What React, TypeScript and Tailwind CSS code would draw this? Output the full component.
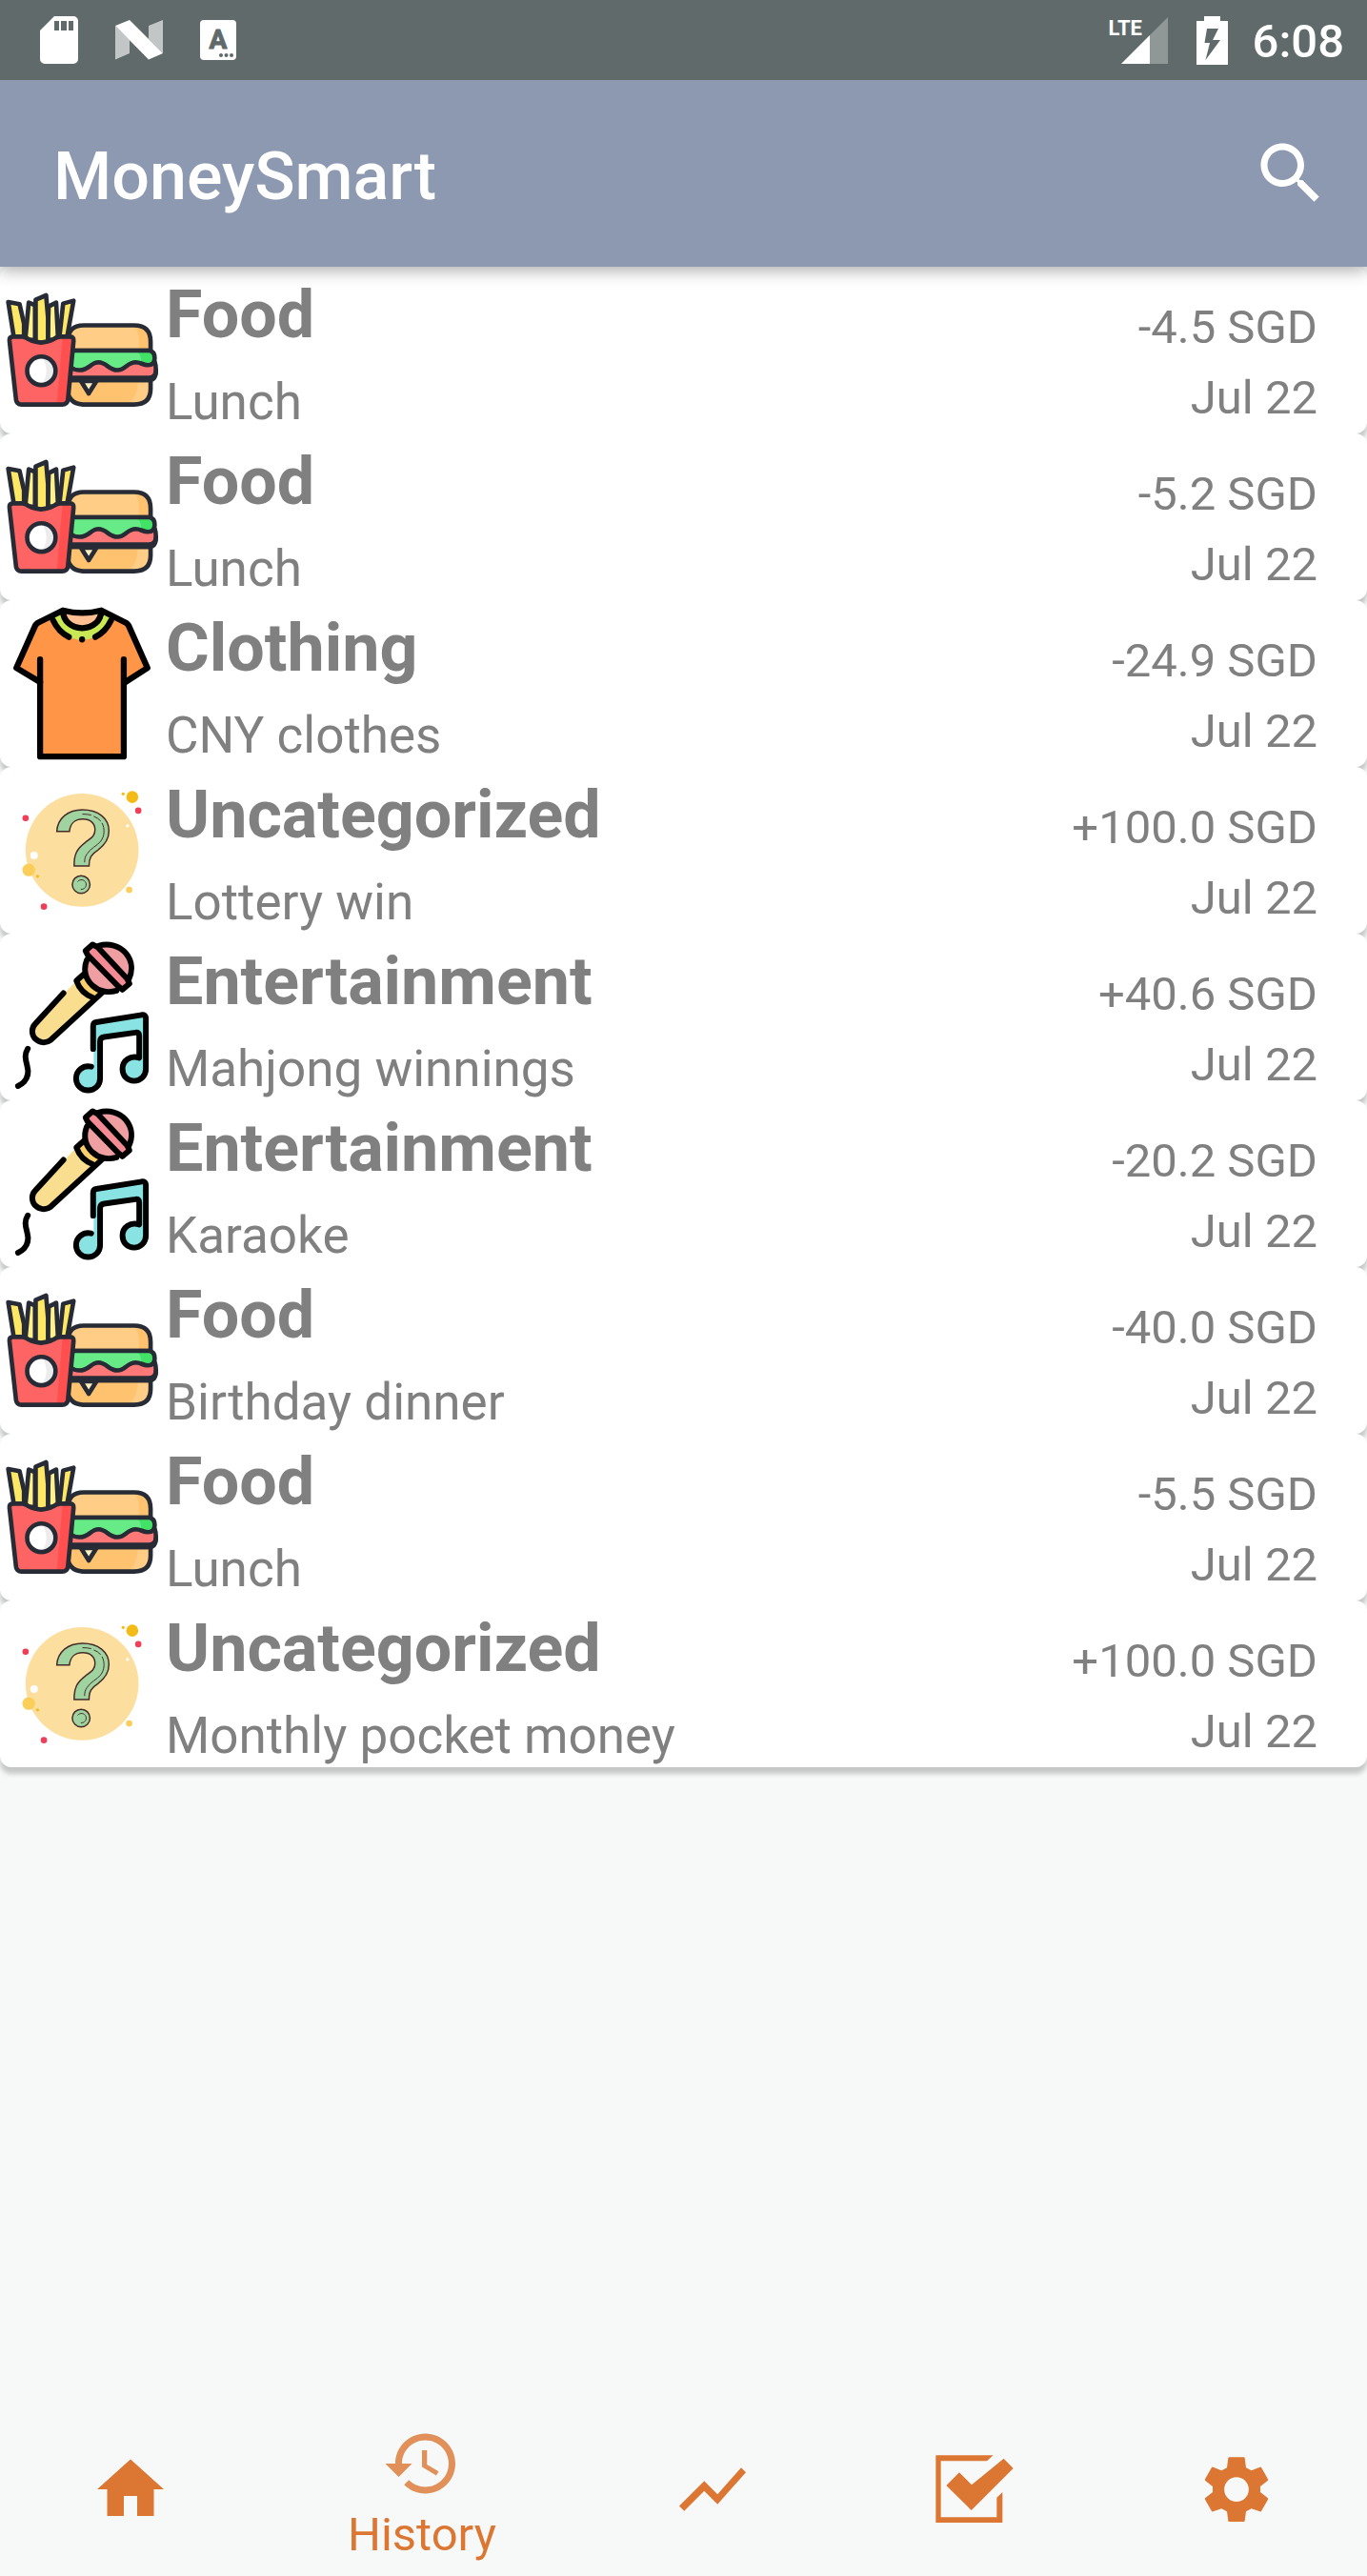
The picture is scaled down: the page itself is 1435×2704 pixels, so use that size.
import React from 'react';

type Category = 'Food' | 'Clothing' | 'Uncategorized' | 'Entertainment';

type Transaction = {
  category: Category;
  note: string;
  amount: string;
  date: string;
};

const transactions: Transaction[] = [
  { category: 'Food', note: 'Lunch', amount: '-4.5 SGD', date: 'Jul 22' },
  { category: 'Food', note: 'Lunch', amount: '-5.2 SGD', date: 'Jul 22' },
  { category: 'Clothing', note: 'CNY clothes', amount: '-24.9 SGD', date: 'Jul 22' },
  { category: 'Uncategorized', note: 'Lottery win', amount: '+100.0 SGD', date: 'Jul 22' },
  { category: 'Entertainment', note: 'Mahjong winnings', amount: '+40.6 SGD', date: 'Jul 22' },
  { category: 'Entertainment', note: 'Karaoke', amount: '-20.2 SGD', date: 'Jul 22' },
  { category: 'Food', note: 'Birthday dinner', amount: '-40.0 SGD', date: 'Jul 22' },
  { category: 'Food', note: 'Lunch', amount: '-5.5 SGD', date: 'Jul 22' },
  { category: 'Uncategorized', note: 'Monthly pocket money', amount: '+100.0 SGD', date: 'Jul 22' },
];

function FoodIcon() {
  return (
    <svg viewBox="0 30 525 525" className="block size-full" aria-hidden="true">
      <g stroke="#272b35" strokeWidth="14" strokeLinejoin="round" strokeLinecap="round">
        {/* burger */}
        <path d="M215 294v-30q0-50 50-50h160q52 0 52 52v28z" fill="#ffcd86" stroke="none" />
        <path d="M418 214q22 12 22 50v30h37v-28q0-52-52-52z" fill="#ffc370" stroke="none" />
        <path d="M215 294v-30q0-50 50-50h160q52 0 52 52v28z" fill="none" />
        <path d="M218 387h259v28q0 50-52 50H262q-48-4-48-50z" fill="#ffc370" stroke="none" />
        <path d="M385 465q50 0 52-78h40v28q0 50-52 50z" fill="#ffcd86" stroke="none" />
        <path d="M218 387h259v28q0 50-52 50H262q-48-4-48-50z" fill="none" />
        <path d="M222 330h268q4 10 4 26 0 24-22 24H222z" fill="#ff7878" />
        <path d="M222 294h250q18 2 18 24t-22 22c-16 0-22-9-38-9-28 0-32 25-58 25-28 0-34-25-60-25-24 0-30 25-60 25-14 0-22-4-30-10z" fill="#66eb87" stroke="none" />
        <path d="M418 294h54q18 2 18 24t-22 22c-10 0-16-5-22-7 4-17-2-33-22-39z" fill="#41e266" stroke="none" />
        <path d="M222 294h250q18 2 18 24t-22 22c-16 0-22-9-38-9-28 0-32 25-58 25-28 0-34-25-60-25-24 0-30 25-60 25-14 0-22-4-30-10z" fill="none" />
        <path d="M222 387h250q22 0 22-30" fill="none" />
        <path d="M256 390l25 40 25-40z" fill="#fff0c0" />
        {/* fries */}
        <path d="M26 140l36 7 14 62v50H45z" fill="#ffe766" />
        <path d="M91 142l20 8v110H80z" fill="#fff08a" />
        <path d="M178 142l-24 12-3 106h33z" fill="#fff08a" />
        <path d="M113 133l33-14 6 70v80h-39z" fill="#ffe766" />
        <path d="M200 145l33-9-21 118h-24z" fill="#ffe766" />
        {/* box */}
        <path d="M40 250h32q10 1 18 8 40 21 80 0 8-7 20-8h32q12 0 11 13l-18 188q-3 14-18 14H68q-14 0-17-14L30 263q-1-12 10-13z" fill="#ff6464" stroke="none" />
        <path d="M198 252h25q10 2 10 11l-18 188q-3 14-18 14h-29q10-1 13-14z" fill="#ff4f4f" stroke="none" />
        <path d="M40 250h32q10 1 18 8 40 21 80 0 8-7 20-8h32q12 0 11 13l-18 188q-3 14-18 14H68q-14 0-17-14L30 263q-1-12 10-13z" fill="none" />
        <circle cx="131" cy="358" r="45" fill="#ffffff" stroke="none" />
        <path d="M131 313a45 45 0 0 1 0 90q32-45 0-90z" fill="#ececec" stroke="none" />
        <circle cx="131" cy="358" r="45" fill="none" />
      </g>
    </svg>
  );
}

function ShirtIcon() {
  return (
    <svg viewBox="0 30 525 525" className="block size-full" aria-hidden="true">
      <g stroke="#000000" strokeWidth="19" strokeLinejoin="round" strokeLinecap="round">
        <path d="M199 61q62 16 122 0l78 39q5 3 8 8l60 135-75 47v234H127V290l-75-47 60-135q3-5 8-8z" fill="#ff9547" stroke="none" />
        <path d="M169 78l28-16q60 15 124 0l32 16c-6 40-40 72-93 77-53-5-85-37-91-77z" fill="#c8e854" stroke="none" />
        <path d="M199 61q62 16 122 0c-2 34-28 57-61 57s-59-23-61-57z" fill="#ffbf93" stroke="none" />
        <path d="M127 216v308h265V216" fill="none" />
        <path d="M127 288l-75-45 60-135q3-5 8-8l79-39q62 16 122 0l78 39q5 3 8 8l60 135-70 45" fill="none" />
        <path d="M199 63c2 33 28 54 61 54s59-21 61-54M168 92q17 37 50 53M352 92q-17 37-50 53" fill="none" />
        <path d="M260 153v0" fill="none" />
      </g>
    </svg>
  );
}

function QuestionIcon() {
  return (
    <svg viewBox="0 15 525 525" className="block size-full" aria-hidden="true">
      <circle cx="260" cy="277" r="179" fill="#fcdf9f" />
      <circle cx="419" cy="109" r="19" fill="#f4bb17" />
      <circle cx="390" cy="99" r="5" fill="#f4bb17" />
      <circle cx="119" cy="360" r="5" fill="#f4bb17" />
      <circle cx="438" cy="152" r="10" fill="#ef3e57" />
      <circle cx="81" cy="176" r="10" fill="#ef3e57" />
      <circle cx="139" cy="456" r="10" fill="#ef3e57" />
      <circle cx="91" cy="340" r="20" fill="#fbcd59" />
      <circle cx="409" cy="403" r="10" fill="#fbcd59" />
      <circle cx="108" cy="294" r="12" fill="#ffffff" />
      <circle cx="404" cy="200" r="5" fill="#ffffff" />
      <g fill="#9fd3a0" stroke="#472b29" strokeWidth="4.5">
        <path d="M180 218c2-42 36-69 81-69 50 0 84 27 84 67 0 28-14 46-35 61-21 13-28 25-28 50h-47c-1-37 9-54 35-74 19-15 31-21 31-40 0-21-15-34-39-34-26 0-40 16-42 39z" />
        <circle cx="257" cy="386" r="28" />
        <path d="M261 163q15 0 28 3M297 170q13 5 22 15M323 191c10 18 8 43-4 58-10 14-33 22-44 41-6 9-7 15-7 26M246 377a15 15 0 1 1 10 24" fill="none" strokeWidth="3" />
      </g>
    </svg>
  );
}

function KaraokeIcon() {
  return (
    <svg viewBox="0 30 525 525" className="block size-full" aria-hidden="true">
      <g stroke="#000000" strokeWidth="18" strokeLinejoin="round" strokeLinecap="round" fill="none">
        {/* microphone */}
        <path d="M242 178L110 316c-14 14-10 34 1 47 13 13 33 17 50 4l137-132q-38-16-56-57z" fill="#f9de8f" stroke="none" />
        <path d="M262 156l-22 21q14 42 58 58l25-23z" fill="#f9cf6e" stroke="none" />
        <circle cx="342" cy="135" r="75" fill="#ef9fa1" stroke="none" />
        <path d="M293 64l-22 20 117 121 22-20z" fill="#f48a93" stroke="none" />
        <path d="M201 217l-89 97c-14 14-12 34-1 47 13 13 33 17 50 4l162-149" />
        <path d="M264 158l-22 20q14 40 54 54" />
        <path d="M275 112c-12 30-5 60 17 80 20 19 50 26 77 17M312 67c32-10 68 0 87 24 20 24 22 55 9 82" />
        <path d="M310 72l-17-9-22 20 7 14 96 98 14 11 22-19-7-15z" />
        <path d="M88 393c-12 20-7 34-2 54 6 22 2 38-10 51q-6 7-19 13" />
        {/* notes */}
        <path d="M297 318q0-8 10-9l145-22q10 0 10 9v160a38 38 0 1 1-20-33v-80q-3-4-11-3l-105 15q-8 2-8 10v124a40 40 0 1 1-21-37z" fill="#88e3e2" stroke="none" />
        <path d="M295 394v-73q0-10 10-12l144-23q13-1 13 11v160c0 23-18 38-37 38-22 0-37-16-37-38 0-27 25-44 53-35v-70q0-12-12-10l-99 14q-13 2-13 14v118c0 22-18 37-38 37s-38-15-38-38c0-24 22-43 48-37" />
      </g>
    </svg>
  );
}

const categoryIcons: Record<Category, () => React.JSX.Element> = {
  Food: FoodIcon,
  Clothing: ShirtIcon,
  Uncategorized: QuestionIcon,
  Entertainment: KaraokeIcon,
};

function StatusBar() {
  return (
    <div className="relative z-20 flex h-[84px] items-center justify-between bg-[#606a6a] pl-[42px] pr-[24px] text-white">
      <div className="flex items-center gap-[39px]">
        <svg viewBox="0 0 40 50" className="h-[50px] w-[40px]" fill="currentColor" aria-label="SD card">
          <path fillRule="evenodd" d="M15 0h20a5 5 0 0 1 5 5v40a5 5 0 0 1-5 5H5a5 5 0 0 1-5-5V15zM15 5v10h5V5zM22 5v10h6V5zM30 5v10h5V5z" />
        </svg>
        <svg viewBox="0 0 50 42" className="h-[42px] w-[50px]" fill="currentColor" aria-label="System notification">
          <path d="M0 6l15 15v14L0 41.500z" opacity=".62" />
          <path d="M35 6L50 0v35L35 20z" opacity=".62" />
          <path d="M0 6l15-6 35 35-15 6.500z" />
        </svg>
        <svg viewBox="0 0 38 42" className="h-[42px] w-[38px]" aria-label="Keyboard">
          <rect width="38" height="42" rx="4" fill="#ffffff" />
          <text x="19" y="30" textAnchor="middle" fill="#606a6a" stroke="#606a6a" strokeWidth="1" strokeLinejoin="round" fontFamily="Roboto, sans-serif" fontWeight="700" fontSize="28">A</text>
          <g fill="#606a6a">
            <circle cx="22" cy="37" r="2" />
            <circle cx="27.500" cy="37" r="2" />
            <circle cx="33" cy="37" r="2" />
          </g>
        </svg>
      </div>
      <div className="flex items-center">
        <div className="relative mr-[30px]">
          <svg viewBox="0 0 49 49" className="block size-[49px]" fill="currentColor" aria-label="Signal">
            <path d="M49 0v49H0z" opacity=".3" />
            <path d="M30 19v30H0z" />
          </svg>
          <span className="absolute -left-[13px] top-0 text-[22px] leading-[24px] font-bold">LTE</span>
        </div>
        <svg viewBox="0 0 33 51" className="mr-[26px] h-[51px] w-[33px]" fill="currentColor" aria-label="Battery charging">
          <path fillRule="evenodd" d="M8 0h17v5h8v46H0V5h8zM11 13L8.500 28H14L9.500 46 25 25h-8l6-12z" />
        </svg>
        <time className="pt-[4px] text-[49px] leading-[58px] font-medium">6:08</time>
      </div>
    </div>
  );
}

function TopBar() {
  return (
    <header className="relative z-10 flex h-[196px] items-center justify-between bg-[#8d99b0] pl-[56px] pr-[38px] text-white shadow-[0_4px_16px_rgba(0,0,0,0.33)]">
      <h1 className="pt-[6px] text-[70px] leading-[82px] font-medium">MoneySmart</h1>
      <button type="button" aria-label="Search" className="size-[84px]">
        <svg viewBox="0 0 24 24" className="size-full" fill="currentColor">
          <path d="M15.500 14h-.790l-.280-.270C15.410 12.590 16 11.110 16 9.500 16 5.910 13.090 3 9.500 3S3 5.910 3 9.500 5.910 16 9.500 16c1.610 0 3.090-.590 4.230-1.570l.270.280v.790l5 4.990L20.490 19zm-6 0C7.010 14 5 11.990 5 9.500S7.010 5 9.500 5 14 7.010 14 9.500 11.990 14 9.500 14" />
        </svg>
      </button>
    </header>
  );
}

function TransactionRow({ item }: { item: Transaction }) {
  const Icon = categoryIcons[item.category];
  return (
    <li className="flex h-[175px] rounded-[12px] bg-white pr-[52px] text-[#808080] shadow-[0_7px_5px_rgba(0,0,0,0.2)]">
      <div className="h-[175px] w-[174px] shrink-0">
        <Icon />
      </div>
      <div className="flex min-w-0 flex-1 flex-col gap-[20px] pt-[9px] whitespace-nowrap">
        <h2 className="text-[70px] leading-[82px] font-bold">{item.category}</h2>
        <p className="text-[53px] leading-[62px]">{item.note}</p>
      </div>
      <div className="flex flex-col gap-[17px] pt-[35px] text-right text-[49px] leading-[57px] whitespace-nowrap">
        <span>{item.amount}</span>
        <span>{item.date}</span>
      </div>
    </li>
  );
}

function BottomNav() {
  const item = 'flex flex-[275_1_0%] items-center justify-center';
  return (
    <nav className="flex h-[182px] text-[#dc7633]">
      <a href="#home" aria-label="Home" className={item}>
        <svg viewBox="0 0 24 24" className="size-[84px]" fill="currentColor">
          <path d="M10 20v-6h4v6h5v-8h3L12 3 2 12h3v8z" />
        </svg>
      </a>
      <a href="#history" aria-current="page" className="flex flex-[337_1_0%] flex-col items-center justify-end gap-1 pb-[15px]">
        <svg viewBox="0 0 24 24" className="size-[84px] opacity-80" fill="currentColor">
          <path d="M13 3c-4.970 0-9 4.030-9 9H1l4 4 4-4H6c0-3.870 3.130-7 7-7s7 3.130 7 7-3.130 7-7 7c-1.930 0-3.680-.790-4.940-2.060l-1.420 1.420C8.270 19.990 10.510 21 13 21c4.970 0 9-4.030 9-9s-4.030-9-9-9m-1 5v5l4.280 2.540.720-1.210-3.500-2.080V8z" />
        </svg>
        <span className="text-[49px] leading-[57px]">History</span>
      </a>
      <a href="#trends" aria-label="Trends" className={item}>
        <svg viewBox="0 0 24 24" className="size-[84px]" fill="currentColor">
          <path d="M3.500 18.490l6-6.010 4 4L22 6.920l-1.410-1.410-7.090 7.970-4-4L2 16.990z" />
        </svg>
      </a>
      <a href="#tasks" aria-label="Tasks" className={item}>
        <svg viewBox="11 35 252 252" className="size-[84px]" fill="currentColor">
          <path d="M15 54h181l-20 18H31v177h176v-62l18-17v96H15z" />
          <path d="M48 149l41-41 39 39L229 64l30 31-132 132z" />
        </svg>
      </a>
      <a href="#settings" aria-label="Settings" className={item}>
        <svg viewBox="837 35 252 252" className="size-[84px]" fill="currentColor">
          <path
            fillRule="evenodd"
            d="M940 60h46q2 0 3 2l4 31 17 9 27-11q3-1 4 1l21 37q1 3-1 5l-23 18v18l23 18q2 2 1 5l-21 37q-1 2-4 1l-27-9-17 9-4 30q-1 2-3 2h-46q-2 0-3-2l-4-30-17-9-27 9q-3 1-4-1l-21-37q-1-3 1-5l23-18v-18l-23-18q-2-2-1-5l21-37q1-2 4-1l27 11 17-9 4-31q1-2 3-2zM963 123a38.500 38.500 0 1 0 0 77 38.500 38.500 0 1 0 0-77z"
          />
        </svg>
      </a>
    </nav>
  );
}

export default function App() {
  return (
    <div className="flex min-h-screen flex-col bg-[#f7f9f9] font-[Roboto,sans-serif]">
      <StatusBar />
      <TopBar />
      <main className="flex-1">
        <ul>
          {transactions.map((item, index) => (
            <TransactionRow key={index} item={item} />
          ))}
        </ul>
      </main>
      <BottomNav />
    </div>
  );
}
